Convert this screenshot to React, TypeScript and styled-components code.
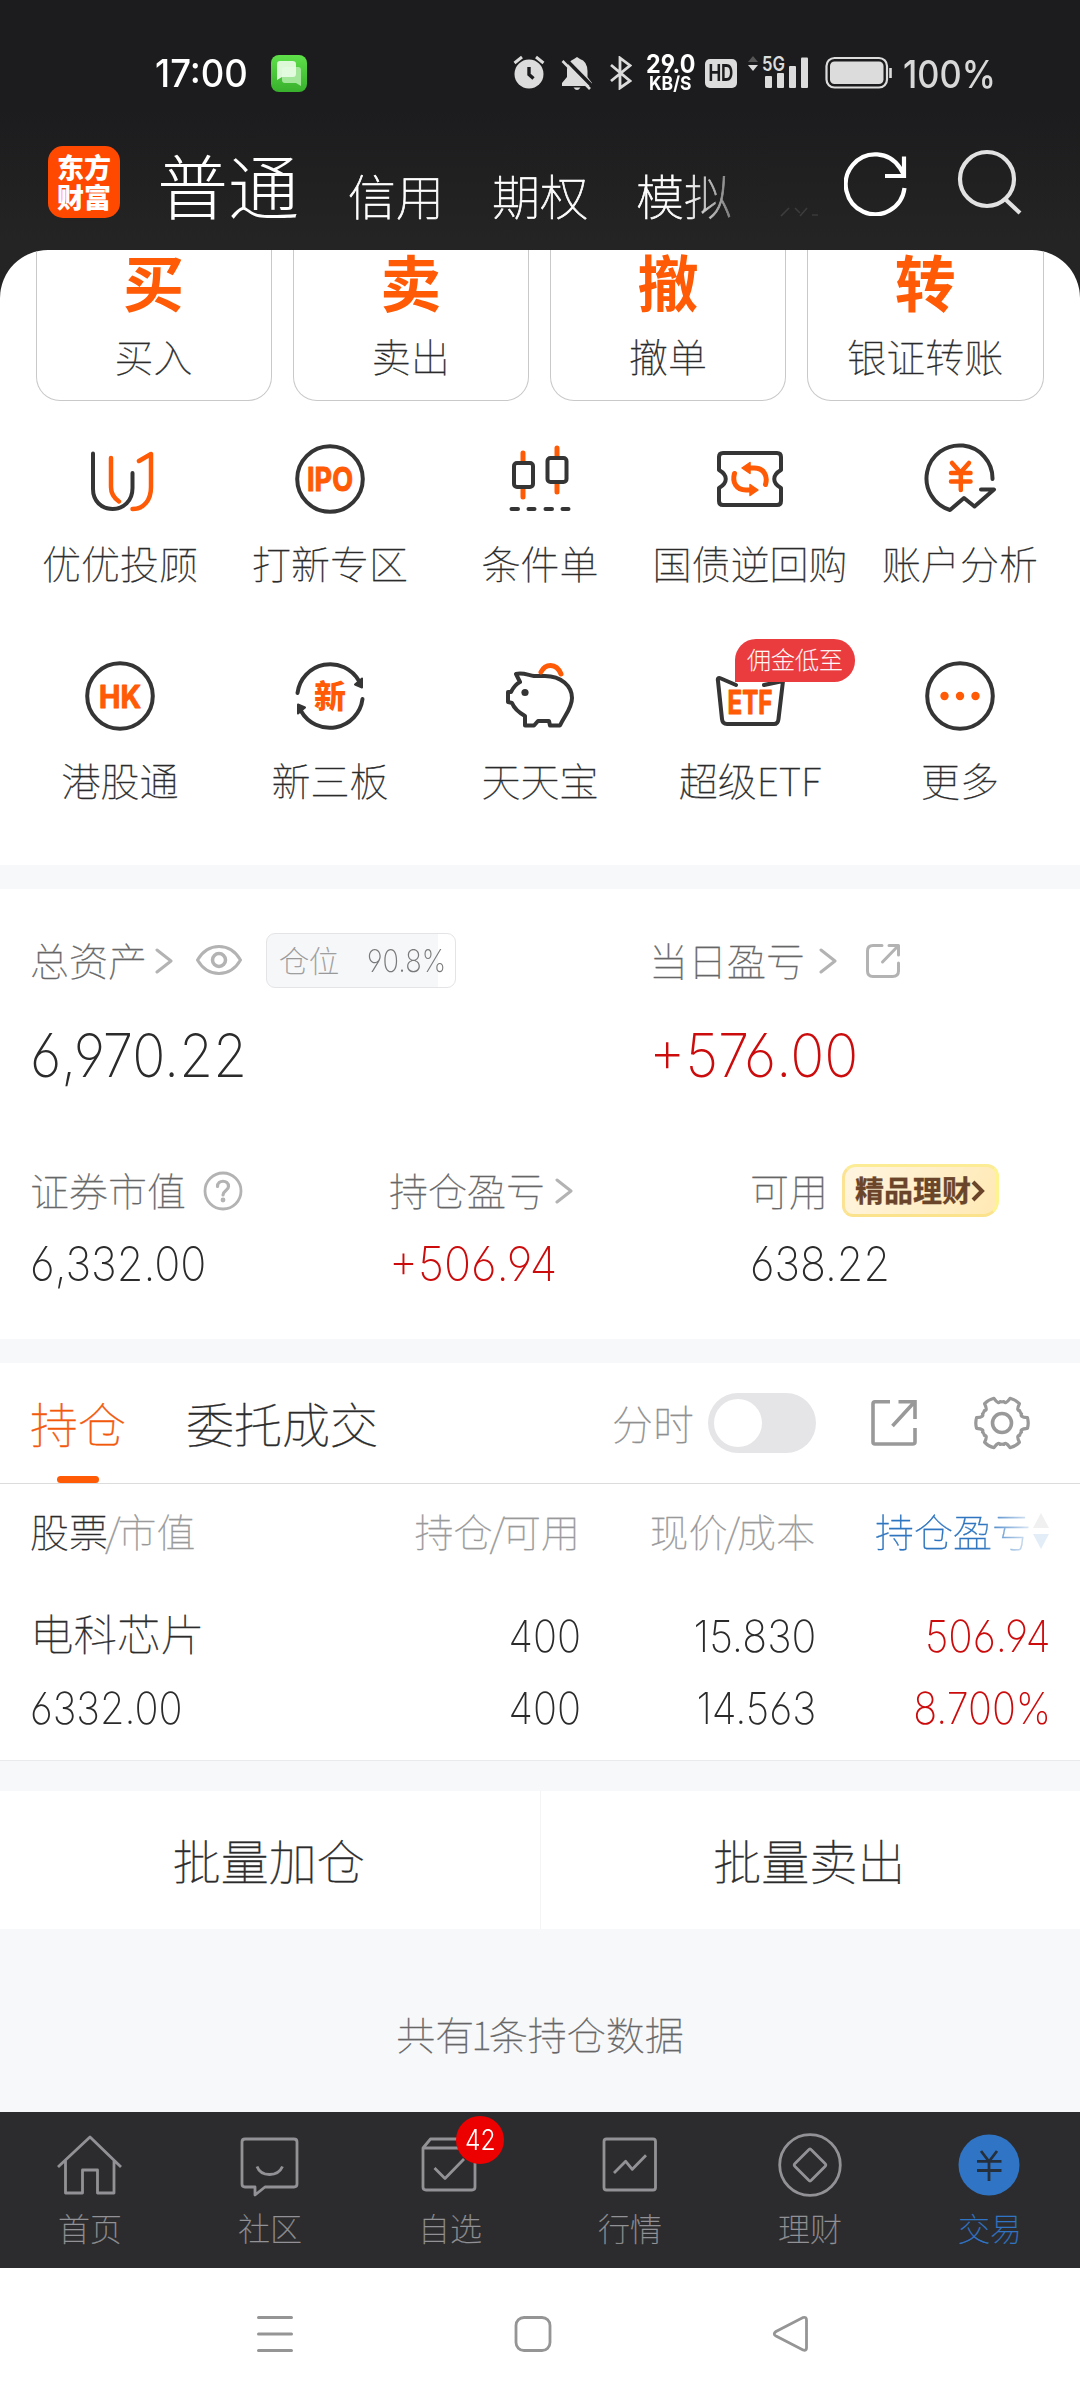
import React from 'react';
import styled, { createGlobalStyle, css } from 'styled-components';

const Global = createGlobalStyle`
  *{box-sizing:border-box;}
  html,body{margin:0;padding:0;background:#fff;}
  body{width:1080px;overflow-x:hidden;font-family:'Noto Sans CJK SC','Inter',sans-serif;font-weight:100;}
  svg{display:block;flex:none;}
`;

const ORANGE = '#ff5a05';
const INK = '#353535';
const RED = '#cc0c0c';

/* ---------- text primitives ---------- */
interface TxtProps { $s?: number; $c?: string; $w?: number; $k?: number; $lh?: number; $ls?: number; }
const Txt = styled.span<TxtProps>`
  display:block;
  flex:none;
  white-space:nowrap;
  font-size:${p => p.$s ?? 39}px;
  line-height:${p => p.$lh ?? 50}px;
  color:${p => p.$c ?? '#2b2b2b'};
  font-weight:${p => p.$w ?? 100};
  letter-spacing:${p => p.$ls ?? 0}px;
  -webkit-text-stroke:${p => p.$k ?? 0.3}px currentColor;
`;

interface NumProps { $s?: number; $c?: string; $w?: number; $x?: number; $end?: boolean; $lh?: number; }
const Num = styled.span<NumProps>`
  display:block;
  flex:none;
  white-space:nowrap;
  font-family:'Inter',sans-serif;
  font-feature-settings:'cv03','cv04';
  font-size:${p => p.$s ?? 44}px;
  line-height:${p => p.$lh ?? 60}px;
  font-weight:${p => p.$w ?? 165};
  color:${p => p.$c ?? '#2b2b2b'};
  transform:scaleX(${p => p.$x ?? 0.905});
  transform-origin:${p => (p.$end ? 'right' : 'left')} center;
`;
const Tight = styled.span`margin:0 -3px;`;

/* ---------- header ---------- */
const Header = styled.header`
  height:300px;
  margin-bottom:-50px;
  background:linear-gradient(#1c1c1e 0,#1c1c1e 110px,#242424 240px,#242424 100%);
`;
const StatusBar = styled.div`
  height:146px;
  display:flex;
  align-items:center;
  padding-left:155px;
`;
const Slot = styled.div<{ $w: number; $l?: number; $dy?: number }>`
  flex:none;
  width:${p => p.$w}px;
  margin-left:${p => p.$l ?? 0}px;
  margin-top:${p => p.$dy ?? 0}px;
`;
const Speed = styled(Slot)`
  display:flex;
  flex-direction:column;
`;
const HdChip = styled.div`
  flex:none;
  width:32px;height:29px;
  margin-left:11px;
  border-radius:5px;
  background:#dcdcdc;
  display:flex;align-items:center;justify-content:center;
`;
const HdText = styled.span`
  font:700 23px/29px 'Inter',sans-serif;
  color:#1c1c1e;
  transform:scaleX(.74);
`;
const TitleBar = styled.div`
  height:104px;
  display:flex;
  align-items:flex-start;
  padding-left:48px;
`;
const Logo = styled.div`
  width:72px;height:72px;
  border-radius:15px;
  background:#ff4800;
  display:flex;flex-direction:column;align-items:center;justify-content:center;
  margin-right:37px;
`;
const LogoLine = styled.span`
  font-family:'Noto Sans CJK SC',sans-serif;
  font-weight:900;
  font-size:27px;
  line-height:30px;
  color:#fff;
`;
const Tabs = styled.nav`
  display:flex;
  width:664px;
  overflow:hidden;
  -webkit-mask-image:linear-gradient(90deg,#000 530px,rgba(0,0,0,.14) 595px,rgba(0,0,0,.1));
`;
const MainTab = styled(Txt)`margin-right:49px;`;
const SubTab = styled(Txt)`margin:18px 48px 0 0;`;
const NextTab = styled.svg`margin-top:58px;`;

/* ---------- sheet ---------- */
const Sheet = styled.main`
  position:relative;
  background:#fff;
  border-radius:48px 48px 0 0;
  overflow:hidden;
`;
const Cards = styled.div`
  height:151px;
  padding:0 36.5px 0 35.5px;
  display:grid;
  grid-template-columns:repeat(4,1fr);
  gap:21px;
`;
const Card = styled.div`
  border:1px solid #c9c9c9;
  border-top:none;
  border-radius:0 0 24px 24px;
  display:flex;flex-direction:column;align-items:center;
`;
const BigGlyph = styled(Txt)`margin:-4px 0 14px;`;
const Tools = styled.div`
  height:464px;
  padding:0 15px;
  display:grid;
  grid-template-columns:repeat(5,210px);
  grid-auto-rows:217px;
`;
const Tool = styled.div`
  position:relative;
  display:flex;flex-direction:column;align-items:center;
  padding-top:33px;
  gap:13px;
`;
const Promo = styled.div`
  position:absolute;
  left:90px;top:21px;
  width:120px;height:43px;
  border-radius:21px 21px 21px 0;
  background:#ea3c3e;
  display:flex;align-items:center;justify-content:center;
`;
const Band = styled.div<{ $h: number }>`
  height:${p => p.$h}px;
  background:#f7f8fa;
`;

/* ---------- assets ---------- */
const Assets = styled.section`
  height:450px;
  padding:44px 0 0 30px;
`;
const Duo = styled.div<{ $h: number; $mt?: number }>`
  height:${p => p.$h}px;
  margin-top:${p => p.$mt ?? 0}px;
  display:grid;
  grid-template-columns:619px 1fr;
`;
const Trio = styled(Duo)`grid-template-columns:359px 361px 1fr;`;
const Cell = styled.div`
  display:flex;
  align-items:center;
`;
const Lift = styled(Txt)`margin-top:-3px;`;
const Gap = styled.i<{ $w: number }>`flex:none;width:${p => p.$w}px;`;
const Position = styled.div`
  width:190px;height:55px;
  border:1px solid #e4e4e6;
  border-radius:9px;
  padding-left:12px;
  display:flex;align-items:center;
  background:linear-gradient(90deg,#f6f7f9 90.8%,#fff 90.8%);
`;
const Wealth = styled.div`
  width:157px;height:53px;
  border:3px solid;
  border-color:#fbec95 #fdf38f #fbe28d #fbe393;
  border-radius:14px 12px 16px 11px;
  background:linear-gradient(120deg,#fff5e0,#ffe9b4);
  display:flex;align-items:center;
  padding-left:10px;
`;

/* ---------- holdings ---------- */
const HoldTabs = styled.div`
  height:121px;
  border-bottom:1px solid #dcdcdc;
  padding-left:30px;
  display:flex;
  align-items:center;
`;
const HoldTab = styled.div`
  position:relative;
  height:120px;
  display:flex;align-items:center;
`;
const Underline = styled.i`
  position:absolute;
  left:27px;bottom:0;
  width:42px;height:7px;
  border-radius:4px;
  background:${ORANGE};
`;
const Toggle = styled.div`
  width:108px;height:60px;
  border-radius:30px;
  background:#e5e5e7;
  padding:6px;
`;
const Knob = styled.div`
  width:48px;height:48px;
  border-radius:50%;
  background:#fff;
`;
const tableGrid = css`
  display:grid;
  grid-template-columns:292px 259px 235px 235px;
  padding-left:30px;
  align-items:center;
`;
const TableHead = styled.div`
  ${tableGrid}
  height:94px;
  padding-bottom:2px;
  margin-bottom:22px;
`;
const TableRow = styled.div`
  ${tableGrid}
  height:72px;
`;
const Col = styled.div<{ $end?: boolean; $pr?: number }>`
  display:flex;
  justify-content:${p => (p.$end ? 'flex-end' : 'flex-start')};
  align-items:center;
  padding-right:${p => p.$pr ?? 0}px;
`;
const StockName = styled(Txt)`margin-top:-7px;`;
const FadeText = styled(Txt)`
  -webkit-mask-image:linear-gradient(90deg,#000 108px,rgba(0,0,0,.12) 157px);
`;
const Table = styled.div`
  padding-bottom:16px;
  border-bottom:1px solid #e9eaec;
`;
const Batch = styled.div`
  display:flex;
  height:138px;
`;
const BatchBtn = styled.div`
  flex:1;
  display:flex;align-items:center;justify-content:center;
  padding-right:2px;
  & + &{border-left:1px solid #f3f4f6;}
`;
const Total = styled.div`
  height:183px;
  background:#f7f8fa;
  display:flex;justify-content:center;
  padding-top:79px;
`;

/* ---------- bottom ---------- */
const BottomNav = styled.nav`
  height:156px;
  background:#2c2c2e;
  display:grid;
  grid-template-columns:repeat(6,180px);
`;
const NavItem = styled.div`
  position:relative;
  display:flex;flex-direction:column;align-items:center;
  padding-top:18px;
  gap:7px;
`;
const Badge = styled.div`
  position:absolute;
  left:96px;top:4px;
  width:48px;height:48px;
  border-radius:50%;
  background:#ec0000;
  display:flex;align-items:center;justify-content:center;
`;
const BadgeText = styled.span`
  font:300 28px/48px 'Inter',sans-serif;
  color:#fff;
  transform:scaleX(.88);
`;
const SystemNav = styled.div`
  height:132px;
  background:#fff;
  display:flex;
  align-items:center;
  gap:218px;
  padding-left:255px;
`;

/* ---------- icons ---------- */
const Ico = ({ children }: { children: React.ReactNode }) => (
  <svg width="90" height="90" viewBox="-45 -45 90 90" fill="none" stroke={INK} strokeWidth="4" strokeLinecap="round" strokeLinejoin="round">{children}</svg>
);
const IconText = ({ w, s, y, children }: { w: number; s: number; y: number; children: string }) => (
  <text x={-w / 2} y={y} textLength={w} lengthAdjust="spacingAndGlyphs" fontSize={s} fontWeight="700" fontFamily="Inter,'Noto Sans CJK SC',sans-serif" fill={ORANGE} stroke={ORANGE} strokeWidth="1">{children}</text>
);

const swapArrow = (
  <>
    <path d="M-2-11H4C14-11 18-3 15.500 5.500" stroke={ORANGE} strokeWidth="5" />
    <path d="M-8-11L0-16.500V-5.500Z" fill={ORANGE} stroke={ORANGE} strokeWidth="1.500" />
  </>
);
const ringArrow = (
  <>
    <path d="M-32.500-3A33 33 0 0 1 29-15" />
    <path d="M25-11.500L32-17.500L32-8.500Z" fill={INK} strokeWidth="2" />
  </>
);

const tools: { label: string; icon: React.ReactNode; promo?: string }[] = [
  { label: '优优投顾', icon: <Ico>
    <path d="M-27-25.500V10C-27 22-18.500 30-7.500 30S12.500 22 12.500 9V-6" />
    <path d="M-9-21V8C-9 15-6 19-1 22.500M19-18L31-25V8C31 21 24 30 12.500 30" stroke={ORANGE} strokeWidth="4.500" />
  </Ico> },
  { label: '打新专区', icon: <Ico><circle r="32.800" /><IconText w={46} s={32} y={12}>IPO</IconText></Ico> },
  { label: '条件单', icon: <Ico>
    <path d="M-17-26V-18M-17 10V18M17-31V-23M17 5V13" stroke={ORANGE} strokeWidth="5" />
    <rect x="-26" y="-16" width="19" height="24" rx="3" /><rect x="7.500" y="-21" width="19" height="24" rx="3" />
    <path d="M-28.500 30H-22M-11.500 30H-5.500M5.500 30H12M22.500 30H28.500" />
  </Ico> },
  { label: '国债逆回购', icon: <Ico>
    <path d="M-27-26H27Q31-26 31-22V-9C22-4 22 4 31 9V22Q31 26 27 26H-27Q-31 26-31 22V9C-22 4-22-4-31-9V-22Q-31-26-27-26Z" />
    <g>{swapArrow}</g><g transform="rotate(180)">{swapArrow}</g>
  </Ico> },
  { label: '账户分析', icon: <Ico>
    <path d="M32.500 0A33 33 0 1 0-10 31L4 19L14.500 27.500L34 10.500H21" />
    <path d="M-8-16L.5-6.500L9-16M-9-6H10.500M-9 2.500H10.500M.8-6V11" stroke={ORANGE} strokeWidth="4.500" />
  </Ico> },
  { label: '港股通', icon: <Ico><circle r="32.800" /><IconText w={42} s={31} y={11.5}>HK</IconText></Ico> },
  { label: '新三板', icon: <Ico>
    <g>{ringArrow}</g><g transform="rotate(180)">{ringArrow}</g>
    <text x="-16" y="12" fontSize="32" fontWeight="900" fontFamily="'Noto Sans CJK SC',sans-serif" fill={ORANGE} stroke="none">新</text>
  </Ico> },
  { label: '天天宝', icon: <Ico>
    <path d="M-24-22C-18-24-12-21-6-20H5C21-20 32-10 32 2C32 12 25 19 20 29.500H10L9 25H-2L-6 29.500H-15V20C-22 16-26 12-28 7L-32 6V-4H-29C-27-8-24-12-20-14Z" />
    <circle cx="-15" cy="-3.500" r="3.600" fill={INK} stroke="none" />
    <path d="M1-24C5-32 16-34 21-22" stroke={ORANGE} strokeWidth="5" />
  </Ico> },
  { label: '超级ETF', promo: '佣金低至', icon: <Ico>
    <path d="M-14-11L-29-17.500Q-33-19-32-15L-28 23Q-27.500 28-23 28H24Q28 28 28.500 23L33-15L14-11" />
    <IconText w={45} s={32} y={18}>ETF</IconText>
  </Ico> },
  { label: '更多', icon: <Ico><circle r="32.800" /><g fill={ORANGE} stroke="none"><circle cx="-15.500" r="4.200" /><circle r="4.200" /><circle cx="15.500" r="4.200" /></g></Ico> },
];

const Chevron = ({ c = '#b3b3b3' }: { c?: string }) => (
  <svg width="18" height="26" viewBox="0 0 18 26" fill="none" stroke={c} strokeWidth="3" strokeLinecap="round" strokeLinejoin="round"><path d="M2 2L16 13L2 24" /></svg>
);
const ShareSmall = () => (
  <svg width="36" height="36" viewBox="0 0 36 36" fill="none" stroke="#b3b3b3" strokeWidth="3" strokeLinecap="round" strokeLinejoin="round">
    <path d="M17 2.500H8Q2.500 2.500 2.500 8V28Q2.500 33.500 8 33.500H27.500Q33.500 33.500 33.500 28V20M24 2.500H33.500V12M33 3L17.500 19" />
  </svg>
);
const ShareLarge = () => (
  <svg width="48" height="48" viewBox="0 0 48 48" fill="none" stroke="#999" strokeWidth="3.600">
    <path d="M20 2.800H5Q3 2.800 3 5V43Q3 45 5 45H42.500Q45 45 45 43V29M28.500 2.800H45V20M44.500 3L22.500 27" />
  </svg>
);
const gearPath = (() => {
  const pt = (r: number, deg: number) => {
    const a = (deg * Math.PI) / 180;
    return `${(r * Math.cos(a)).toFixed(2)} ${(r * Math.sin(a)).toFixed(2)}`;
  };
  let d = '';
  for (let k = 0; k < 6; k++) {
    const a = k * 60;
    d += `${k ? 'L' : 'M'}${pt(26, a - 12)}Q${pt(27, a)} ${pt(26, a + 12)}C${pt(20, a + 17)} ${pt(20, a + 22)} ${pt(21.5, a + 25)}Q${pt(20.800, a + 30)} ${pt(21.5, a + 35)}C${pt(20, a + 38)} ${pt(20, a + 43)} ${pt(26, a + 48)}`;
  }
  return d + 'Z';
})();

const navItems: { label: string; icon: React.ReactNode; badge?: string; active?: boolean }[] = [
  { label: '首页', icon: <path d="M-32 2L0-28L31 2M-24.500-5V28H-7.500V5H7.500V28H24V-5" /> },
  { label: '社区', icon: <path d="M-25-26H24Q27-26 27-23V19Q27 22 24 22H-5L-15 30V22H-25Q-28 22-28 19V-23Q-28-26-25-26ZM-13 1.500Q-10 9.500-.5 9.500T12.500 1.500" /> },
  { label: '自选', badge: '42', icon: <path d="M-27-17V22Q-27 25-24 25H22Q25 25 25 22V-17ZM-27-17L-19.500-26H18L25-17M-15.500 3L-5 13.500L14-6" /> },
  { label: '行情', icon: <><rect x="-26" y="-26" width="51.500" height="51" rx="2.500" /><path d="M-16 8L-4.300-3.700L2.300 4.300L16-9.700" /></> },
  { label: '理财', icon: <><circle r="30.300" /><path d="M-1.500-15Q0-17 1.500-15L15-1.500Q16.500 0 15 1.500L1.500 15Q0 17-1.500 15L-15 1.500Q-16.500 0-15-1.500Z" /></> },
  { label: '交易', active: true, icon: <><circle cx="-1" r="30.500" fill="#3075c5" stroke="none" /><path d="M-9-14L-1-3.500L7-14M-13-3.700H11.500M-13 5.500H11.500M-1-3.700V16" stroke="#26303c" /></> },
];

export default function App() {
  return (
    <>
      <Global />
      <Header>
        <StatusBar>
          <Slot $w={94}><Num $s={38} $w={500} $c="#fff" $x={0.96}>17:00</Num></Slot>
          <Slot $w={36} $l={22}>
            <svg width="36" height="37" viewBox="0 0 36 37">
              <defs><linearGradient id="msg" x1="0" y1="0" x2="0" y2="1"><stop offset="0" stopColor="#5fe04a" /><stop offset="1" stopColor="#38b02c" /></linearGradient></defs>
              <rect width="36" height="37" rx="8" fill="url(#msg)" />
              <path d="M14 12H27Q30 12 30 15V31L25 28H14Q11 28 11 25V15Q11 12 14 12Z" fill="#a2e69a" />
              <path d="M9 6H21.500Q25 6 25 9V19Q25 22 22 22H11L6 25V9Q6 6 9 6Z" fill="#e6fbe3" fillOpacity=".93" />
            </svg>
          </Slot>
          <Slot $w={34} $l={205} $dy={-2}>
            <svg width="34" height="36" viewBox="0 0 34 36" fill="none" stroke="#dcdcdc" strokeWidth="3">
              <circle cx="17" cy="20" r="14.500" fill="#dcdcdc" stroke="none" /><path d="M2.500 9L10 3M31.500 9L24 3" />
              <path d="M17 13V20.500L21.500 24.500" stroke="#1c1c1e" strokeWidth="3.400" />
            </svg>
          </Slot>
          <Slot $w={32} $l={15}>
            <svg width="32" height="36" viewBox="0 0 32 36">
              <path d="M16 2L19 4Q26 6 26.500 16V22L31 28V31H1V28L6 22V14Q7 6 13 4Z" fill="#dcdcdc" />
              <path d="M12.500 32.500H19.500Q16 37.500 12.500 32.500Z" fill="#dcdcdc" />
              <path d="M4 3.500L33 33" stroke="#1c1c1e" strokeWidth="3.500" /><path d="M1.500 6L29 34" stroke="#dcdcdc" strokeWidth="2.600" />
            </svg>
          </Slot>
          <Slot $w={22} $l={17}>
            <svg width="22" height="34" viewBox="0 0 22 34" fill="none" stroke="#dcdcdc" strokeWidth="2.800"><path d="M1 9L20 25L10 32V2L20 9.500L1 25" /></svg>
          </Slot>
          <Speed $w={48} $l={14}>
            <Num $s={25} $w={650} $lh={20} $c="#fff" $x={0.93}>29.0</Num>
            <Slot $w={44} $l={3}><Num $s={19} $w={650} $lh={19} $c="#fff" $x={0.92}>KB/S</Num></Slot>
          </Speed>
          <HdChip><HdText>HD</HdText></HdChip>
          <Slot $w={64} $l={10}>
            <svg width="64" height="36" viewBox="0 0 64 36" fill="#dcdcdc">
              <path d="M6 1L11 7H1Z" fill="#555" /><path d="M6 16L11 10H1Z" />
              <text x="15" y="15.500" textLength="23" lengthAdjust="spacingAndGlyphs" fontFamily="Inter,sans-serif" fontWeight="600" fontSize="20">5G</text>
              <rect x="18" y="21" width="7" height="12" rx="1" /><rect x="30" y="18" width="7" height="15" rx="1" /><rect x="42" y="11" width="7" height="22" rx="1" /><rect x="54" y="2.500" width="7" height="30.500" rx="1" />
            </svg>
          </Slot>
          <Slot $w={68} $l={14}>
            <svg width="68" height="34" viewBox="0 0 68 34" fill="none" stroke="#dcdcdc">
              <rect x="1.500" y="2" width="60.500" height="29.500" rx="8" strokeWidth="2.200" /><rect x="5" y="5.500" width="53.500" height="22.500" rx="4.500" fill="#dcdcdc" stroke="none" />
              <path d="M65.500 12V22" strokeWidth="2.600" />
            </svg>
          </Slot>
          <Slot $w={92} $l={10} $dy={2}><Num $s={38} $w={460} $c="#d8d8d8" $x={0.905}>100%</Num></Slot>
        </StatusBar>
        <TitleBar>
          <Logo><LogoLine>东方</LogoLine><LogoLine>财富</LogoLine></Logo>
          <Tabs>
            <MainTab $s={71} $w={200} $k={0} $lh={74} $c="#fff">普通</MainTab>
            <SubTab $s={48} $lh={60} $c="#fff" $k={0.7}>信用</SubTab>
            <SubTab $s={48} $lh={60} $c="#fff" $k={0.7}>期权</SubTab>
            <SubTab $s={48} $lh={60} $c="#fff" $k={0.7}>模拟</SubTab>
            <NextTab width="38" height="14" viewBox="0 0 38 14" stroke="#fff" strokeWidth="1.600" fill="none"><path d="M1 12L9 4M15 4L20 9M27 4L20 12M32 11H38" /></NextTab>
          </Tabs>
          <Slot $w={64} $l={23} $dy={4}>
            <svg width="64" height="66" viewBox="0 0 64 66" fill="none" stroke="#fff" strokeWidth="4.200">
              <path d="M60.500 38A29.500 30 0 1 1 56 18L60 25M60 6.500V26H41" />
            </svg>
          </Slot>
          <Slot $w={66} $l={49} $dy={3}>
            <svg width="66" height="66" viewBox="0 0 66 66" fill="none" stroke="#e2e2e2" strokeWidth="4.200"><circle cx="30" cy="30" r="27" /><path d="M48 50L63 64" /></svg>
          </Slot>
        </TitleBar>
      </Header>

      <Sheet>
        <Cards>
          {[['买', '买入'], ['卖', '卖出'], ['撤', '撤单'], ['转', '银证转账']].map(([g, t]) => (
            <Card key={t}><BigGlyph $s={61} $w={700} $lh={70} $c={ORANGE} $k={0}>{g}</BigGlyph><Txt>{t}</Txt></Card>
          ))}
        </Cards>
        <Tools>
          {tools.map(t => (
            <Tool key={t.label}>
              {t.icon}
              <Txt>{t.label}</Txt>
              {t.promo && <Promo><Lift $s={24} $lh={40} $c="#fff">{t.promo}</Lift></Promo>}
            </Tool>
          ))}
        </Tools>
        <Band $h={24} />

        <Assets>
          <Duo $h={55}>
            <Cell>
              <Lift $c="#666">总资产</Lift><Gap $w={8} /><Chevron /><Gap $w={23} />
              <svg width="46" height="34" viewBox="0 0 46 34" fill="none" stroke="#b3b3b3" strokeWidth="3"><path d="M1.500 16C12-2 34-2 44.500 16C34 34 12 34 1.500 16Z" strokeLinejoin="round" /><circle cx="23" cy="16" r="6.500" strokeWidth="3.500" /></svg>
              <Gap $w={24} />
              <Position><Lift $s={30} $c="#999">仓位</Lift><Gap $w={28} /><Num $s={31} $c="#7a7a7a" $x={0.88}>90.8%</Num></Position>
            </Cell>
            <Cell><Lift $c="#666">当日盈亏</Lift><Gap $w={14} /><Chevron /><Gap $w={28} /><ShareSmall /></Cell>
          </Duo>
          <Duo $h={60} $mt={37}>
            <Num $s={60} $w={240} $x={0.915}>6,970.22</Num>
            <Num $s={60} $w={240} $c={RED} $x={0.94}>+576.00</Num>
          </Duo>
          <Trio $h={52} $mt={79}>
            <Cell>
              <Lift $c="#666">证券市值</Lift><Gap $w={17} />
              <svg width="40" height="40" viewBox="0 0 40 40" fill="none" stroke="#b3b3b3" strokeWidth="2.800" strokeLinecap="round"><circle cx="20" cy="20" r="18" /><path d="M14.500 15.500C14.500 8.500 25.500 8.500 25.500 15.500C25.500 19.500 20 19.500 20 24" strokeWidth="3.200" /><circle cx="20" cy="29" r="1" fill="#b3b3b3" /></svg>
            </Cell>
            <Cell><Lift $c="#666">持仓盈亏</Lift><Gap $w={10} /><Chevron /></Cell>
            <Cell>
              <Lift $c="#666">可用</Lift><Gap $w={14} />
              <Wealth><Lift $s={29} $w={700} $c="#6b452a">精品理财</Lift><svg width="14" height="24" viewBox="0 0 14 24" fill="none" stroke="#6b452a" strokeWidth="4"><path d="M2 3L11 12L2 21" /></svg></Wealth>
            </Cell>
          </Trio>
          <Trio $h={50} $mt={23}>
            <Num $s={48} $lh={50} $x={0.9}>6,332.00</Num>
            <Num $s={48} $lh={50} $c={RED} $x={0.935}>+506.94</Num>
            <Num $s={48} $lh={50} $x={0.895}>638.22</Num>
          </Trio>
        </Assets>
        <Band $h={24} />

        <HoldTabs>
          <HoldTab><Lift $s={48} $lh={60} $c="#f2590c" $k={0.4}>持仓</Lift><Underline /></HoldTab>
          <Gap $w={60} />
          <Lift $s={48} $lh={60} $k={0.4}>委托成交</Lift>
          <Gap $w={234} />
          <Lift $s={41} $c="#8f8f8f">分时</Lift>
          <Gap $w={14} />
          <Toggle><Knob /></Toggle>
          <Gap $w={54} /><ShareLarge /><Gap $w={54} />
          <svg width="60" height="60" viewBox="-30 -30 60 60" fill="none" stroke="#999" strokeWidth="3.200" strokeLinejoin="round"><path d={gearPath} /><circle r="9.500" strokeWidth="3.600" /></svg>
        </HoldTabs>
        <Table>
          <TableHead>
            <Col><Txt>股票</Txt><Txt $c="#999"><Tight>/</Tight>市值</Txt></Col>
            <Col $end $pr={1}><Txt $c="#999">持仓<Tight>/</Tight>可用</Txt></Col>
            <Col $end $pr={1}><Txt $c="#999">现价<Tight>/</Tight>成本</Txt></Col>
            <Col $end $pr={1}>
              <FadeText $c="#2f75bf">持仓盈亏</FadeText><Gap $w={1} />
              <svg width="18" height="38" viewBox="0 0 18 38"><path d="M9 2L17 17H1Z" fill="#f0f0f0" /><path d="M9 38L17 23H1Z" fill="#e3edf8" /></svg>
            </Col>
          </TableHead>
          <TableRow>
            <Col><StockName $s={43.5}>电科芯片</StockName></Col>
            <Col $end><Num $end>400</Num></Col>
            <Col $end><Num $end $x={0.935}>15.830</Num></Col>
            <Col $end><Num $end $c={RED} $x={0.92}>506.94</Num></Col>
          </TableRow>
          <TableRow>
            <Col><Num>6332.00</Num></Col>
            <Col $end><Num $end>400</Num></Col>
            <Col $end><Num $end $x={0.92}>14.563</Num></Col>
            <Col $end><Num $end $c={RED} $x={0.9}>8.700%</Num></Col>
          </TableRow>
        </Table>
        <Band $h={30} />
        <Batch>
          <BatchBtn><Lift $s={48} $lh={60} $k={0.4}>批量加仓</Lift></BatchBtn>
          <BatchBtn><Lift $s={48} $lh={60} $k={0.4}>批量卖出</Lift></BatchBtn>
        </Batch>
        <Total><Txt $c="#666">共有<Tight>1</Tight>条持仓数据</Txt></Total>
      </Sheet>

      <BottomNav>
        {navItems.map(n => (
          <NavItem key={n.label}>
            <svg width="70" height="70" viewBox="-35 -35 70 70" fill="none" stroke="#929296" strokeWidth="2.800" strokeLinejoin="round">{n.icon}</svg>
            <Txt $s={32} $lh={40} $c={n.active ? '#3075c5' : '#929296'}>{n.label}</Txt>
            {n.badge && <Badge><BadgeText>{n.badge}</BadgeText></Badge>}
          </NavItem>
        ))}
      </BottomNav>
      <SystemNav>
        <svg width="40" height="40" viewBox="0 0 40 40" stroke="#959595" strokeWidth="3" strokeLinecap="round"><path d="M3.500 3.500H36.500M3.500 20H36.500M3.500 36.500H36.500" /></svg>
        <svg width="40" height="40" viewBox="0 0 40 40" fill="none" stroke="#959595" strokeWidth="2.800"><rect x="3" y="3.500" width="34" height="33" rx="8" /></svg>
        <svg width="40" height="40" viewBox="0 0 40 40" fill="none" stroke="#959595" strokeWidth="2.800"><path d="M32 3.500Q35.500 2.500 35.500 6V34Q35.500 37 32 36L5 22Q1.500 20 5 17.500Z" /></svg>
      </SystemNav>
    </>
  );
}
